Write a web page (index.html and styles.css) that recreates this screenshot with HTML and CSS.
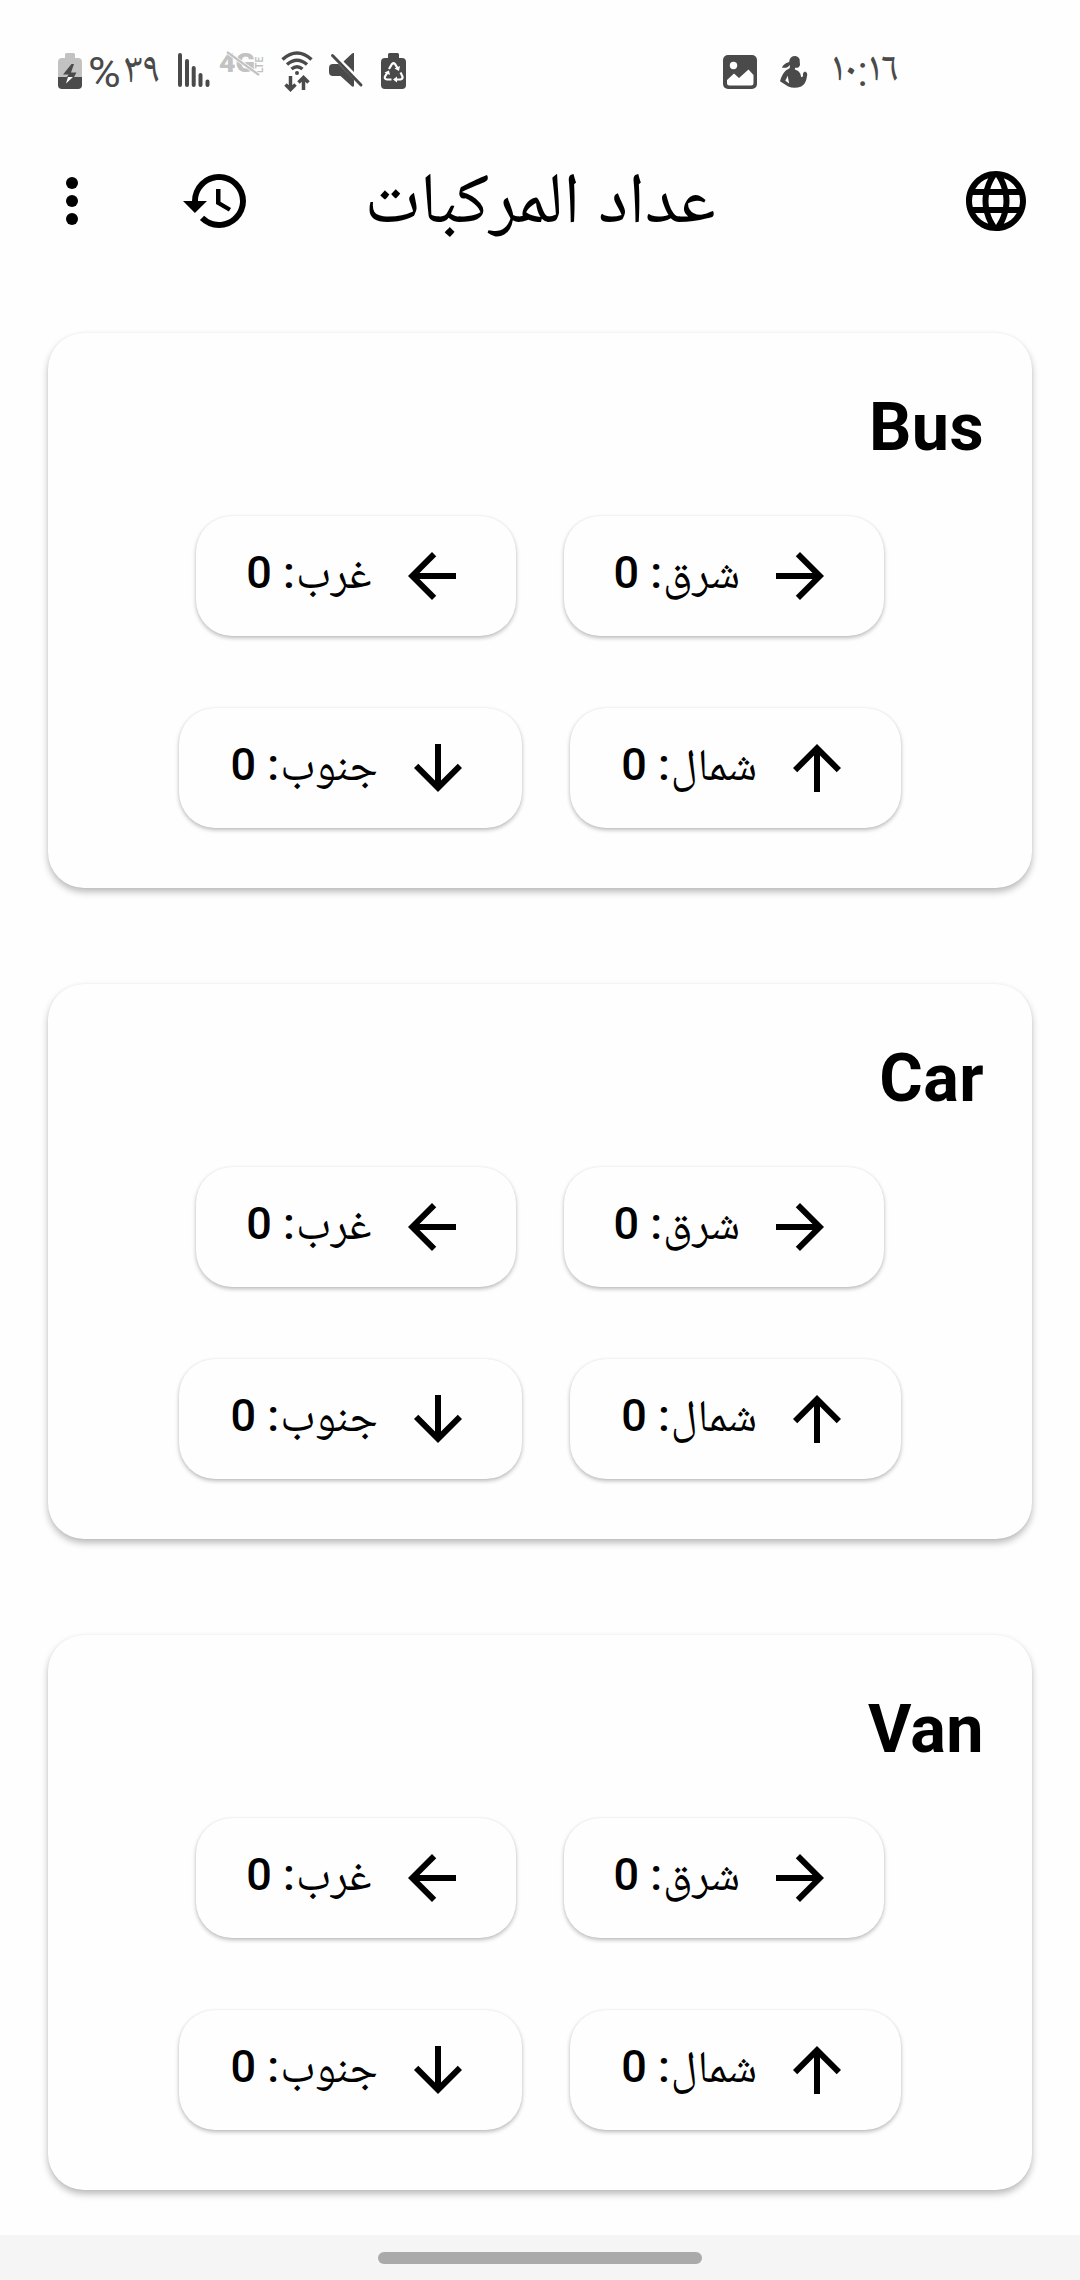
FILE: index.html
```html
<!DOCTYPE html>
<html lang="ar" dir="rtl">
<head>
<meta charset="utf-8">
<title>عداد المركبات</title>
<link rel="stylesheet" href="styles.css">
</head>
<body>
<svg class="defs" aria-hidden="true">
  <symbol id="east" viewBox="0 0 24 24"><path d="M12 4l-1.41 1.41L16.17 11H4v2h12.17l-5.58 5.59L12 20l8-8z"/></symbol>
  <symbol id="west" viewBox="0 0 24 24"><path d="M20 11H7.83l5.59-5.59L12 4l-8 8 8 8 1.41-1.41L7.83 13H20v-2z"/></symbol>
  <symbol id="north" viewBox="0 0 24 24"><path d="M4 12l1.41 1.41L11 7.83V20h2V7.83l5.58 5.59L20 12l-8-8-8 8z"/></symbol>
  <symbol id="south" viewBox="0 0 24 24"><path d="M20 12l-1.41-1.41L13 16.17V4h-2v12.17l-5.58-5.59L4 12l8 8 8-8z"/></symbol>
</svg>

<div class="status" dir="ltr">
  <div class="status-group">
    <svg class="s-battery" width="24" height="36" viewBox="0 0 24 36"><path fill="#c2c2c2" d="M7 1.5Q7 0 8.500 0h7Q17 0 17 1.500V5h3q4 0 4 4v15H0V9q0-4 4-4h3z"/><path fill="#4a4a4a" d="M0 24h24v8q0 4-4 4H4q-4 0-4-4z"/><path fill="#4a4a4a" d="M13.500 11L5 21.500h5.500L9 24h7l2.500-4.500H13L16 11z"/><path fill="#fff" d="M10 24h5l-7 6.500z"/></svg>
    <span class="s-percent">%</span><span class="s-level">٣٩</span>
    <svg class="s-signal" width="32" height="34" viewBox="0 0 32 34" stroke="#4a4a4a" stroke-width="4" stroke-linecap="round"><path d="M2 2v30M9 8v24M15.700 15v17M22.500 22v10M29.500 28.500v3.500"/></svg>
    <span class="s-lte"><b>4G</b><i>LTE</i><svg width="46" height="26" viewBox="0 0 46 26"><path d="M8 1l32 23" stroke="#fff" stroke-width="3.500"/><path d="M8 1l32 23" stroke="#c2c2c2" stroke-width="2.200"/></svg></span>
    <svg class="s-wifi" width="32" height="41" viewBox="0 0 32 41" fill="none" stroke="#4a4a4a" stroke-width="3.500"><path d="M1.500 8.500q14.500-13 29 0M6 13.500q10-8.500 20 0M10.500 18q5.500-4.500 11 0"/><circle cx="16" cy="22" r="2" fill="#4a4a4a" stroke="none"/><path d="M9.500 25v13M4.500 33.500l5 5 5-5M22.500 39V26.500M17.500 31.500l5-5 5 5"/></svg>
    <svg class="s-mute" width="35" height="35" viewBox="0 0 35 35" fill="#4a4a4a"><path d="M25 0v19L14.500 8.500L22.500 1Q24-.5 25 0zM4 11h5.500L25 26.500V33q-1 1.500-2.500 0L11.500 23H4q-4 0-4-4v-4q0-4 4-4z"/><path d="M3.500 2.500l28.500 29.500" stroke="#4a4a4a" stroke-width="3" stroke-linecap="round"/></svg>
    <svg class="s-recycle" width="25" height="36" viewBox="0 0 25 36"><path fill="#4a4a4a" d="M7 1.500Q7 0 8.500 0h8Q18 0 18 1.500V5h3q4 0 4 4v23q0 4-4 4H4q-4 0-4-4V9q0-4 4-4h3z"/><path d="M8 16l3-5q1.500-1.500 3 0l3 5M19.500 19.500l2 4q.5 2.500-2 3H14M10.500 26.500H6q-3-.5-2-3l2.500-4" fill="none" stroke="#fff" stroke-width="2.200"/><path fill="#fff" d="M19 13l-1 5-4.500-2.500zM16 23.500v6L12 26.500zM3.500 19.500L8 17.500l1 4.500z"/></svg>
  </div>
  <div class="status-group">
    <svg class="s-image" width="34" height="34" viewBox="0 0 34 34"><rect width="34" height="34" rx="5" fill="#4a4a4a"/><circle cx="10.500" cy="10.500" r="3.700" fill="#fff"/><path fill="#fff" d="M4 25l7-6.500 5 4.500 9.500-8.500L30.500 20v8q0 2.500-2.500 2.500H6.500Q4 30.500 4 28z"/></svg>
    <svg class="s-person" width="27" height="32" viewBox="0 0 28 33" fill="#4a4a4a"><path d="M9.500 6Q10 0 16 0q5 1 4.500 6 1 3-1 5.500-2 1-4 .5v2q4 1 5.500 4l1 4 2-1q-1-4 2-5 3 1 2 5-1 8-6 10.500Q15 34 8.500 31.500L0 26q2-7 6-11l4-2.500.500-3.500Q8 13 2 12q1-4 7.500-6z"/><path d="M8 20.500l-2.500 5 4 3z" fill="#fff"/></svg>
    <span class="s-time">١٠:١٦</span>
  </div>
</div>

<header class="appbar">
  <svg class="icon" viewBox="0 0 24 24"><path d="M11.990 2C6.470 2 2 6.480 2 12s4.470 10 9.990 10C17.520 22 22 17.520 22 12S17.520 2 11.990 2zm6.930 6h-2.950a15.650 15.650 0 0 0-1.380-3.560A8.030 8.030 0 0 1 18.920 8zM12 4.040c.83 1.200 1.480 2.530 1.910 3.960h-3.820c.43-1.430 1.080-2.760 1.910-3.960zM4.260 14C4.100 13.360 4 12.690 4 12s.1-1.360.26-2h3.380c-.08.66-.14 1.320-.14 2s.06 1.340.14 2H4.260zm.82 2h2.950c.32 1.250.78 2.450 1.380 3.560A7.987 7.987 0 0 1 5.080 16zm2.950-8H5.080a7.987 7.987 0 0 1 4.330-3.560A15.650 15.650 0 0 0 8.030 8zM12 19.960c-.83-1.200-1.480-2.530-1.910-3.960h3.820c-.43 1.430-1.080 2.760-1.910 3.960zM14.340 14H9.660c-.09-.66-.16-1.320-.16-2s.07-1.350.16-2h4.680c.09.650.16 1.320.16 2s-.07 1.340-.16 2zm.25 5.560c.6-1.110 1.060-2.310 1.380-3.560h2.950a8.030 8.030 0 0 1-4.330 3.560zM16.360 14c.08-.66.14-1.320.14-2s-.06-1.340-.14-2h3.380c.16.640.26 1.310.26 2s-.1 1.360-.26 2h-3.380z"/></svg>
  <h1>عداد المركبات</h1>
  <div class="actions">
    <svg class="icon" viewBox="0 0 24 24"><path d="M13 3a9 9 0 0 0-9 9H1l3.890 3.890.070.140L9 12H6c0-3.870 3.130-7 7-7s7 3.130 7 7-3.130 7-7 7c-1.930 0-3.680-.79-4.940-2.060l-1.420 1.420A8.954 8.954 0 0 0 13 21a9 9 0 0 0 0-18zm-1 5v5l4.280 2.540.720-1.210-3.500-2.080V8H12z"/></svg>
    <svg class="icon" viewBox="0 0 24 24"><circle cx="12" cy="6" r="2"/><circle cx="12" cy="12" r="2"/><circle cx="12" cy="18" r="2"/></svg>
  </div>
</header>

<main>
  <section class="card">
    <h2>Bus</h2>
    <div class="row"><button class="btn e"><svg class="icon"><use href="#east"/></svg><span class="label"><span>شرق</span>: 0</span></button><button class="btn w"><svg class="icon"><use href="#west"/></svg><span class="label"><span>غرب</span>: 0</span></button></div>
    <div class="row"><button class="btn n"><svg class="icon"><use href="#north"/></svg><span class="label"><span>شمال</span>: 0</span></button><button class="btn s"><svg class="icon"><use href="#south"/></svg><span class="label"><span>جنوب</span>: 0</span></button></div>
  </section>
  <section class="card">
    <h2>Car</h2>
    <div class="row"><button class="btn e"><svg class="icon"><use href="#east"/></svg><span class="label"><span>شرق</span>: 0</span></button><button class="btn w"><svg class="icon"><use href="#west"/></svg><span class="label"><span>غرب</span>: 0</span></button></div>
    <div class="row"><button class="btn n"><svg class="icon"><use href="#north"/></svg><span class="label"><span>شمال</span>: 0</span></button><button class="btn s"><svg class="icon"><use href="#south"/></svg><span class="label"><span>جنوب</span>: 0</span></button></div>
  </section>
  <section class="card">
    <h2>Van</h2>
    <div class="row"><button class="btn e"><svg class="icon"><use href="#east"/></svg><span class="label"><span>شرق</span>: 0</span></button><button class="btn w"><svg class="icon"><use href="#west"/></svg><span class="label"><span>غرب</span>: 0</span></button></div>
    <div class="row"><button class="btn n"><svg class="icon"><use href="#north"/></svg><span class="label"><span>شمال</span>: 0</span></button><button class="btn s"><svg class="icon"><use href="#south"/></svg><span class="label"><span>جنوب</span>: 0</span></button></div>
  </section>
</main>

<footer class="navbar"><div class="handle"></div></footer>
</body>
</html>
```
FILE: styles.css
```css
* { box-sizing: border-box; }
body {
  margin: 0;
  width: 1080px;
  height: 2280px;
  display: flex;
  flex-direction: column;
  overflow: hidden;
  background: #fefefe;
  color: #000;
  font-family: Roboto, "Noto Naskh Arabic UI", "Noto Naskh Arabic", "Noto Sans Arabic", "DejaVu Sans", sans-serif;
}
.defs { display: none; }
.icon { width: 72px; height: 72px; flex: none; display: block; fill: #000; }

.status {
  height: 117px;
  padding: 51px 181px 0 58px;
  display: flex;
  justify-content: space-between;
  color: #4a4a4a;
}
.status-group { display: flex; align-items: flex-start; height: 42px; }
.status-group svg { flex: none; display: block; overflow: visible; }
.s-battery { margin-top: 2px; }
.s-percent { width: 32px; margin-left: 6px; font-size: 43px; line-height: 43px; transform: scaleX(1.04); transform-origin: left; }
.s-level { width: 38px; margin: 2px 0 0 2px; font-size: 43px; line-height: 40px; direction: ltr; }
.s-signal { margin: 2px 0 0 18px; }
.s-lte { position: relative; display: flex; width: 46px; height: 26px; margin-left: 9px; color: #c2c2c2; }
.s-lte b { width: 37px; font: 900 26px/24px Roboto, sans-serif; transform: scaleX(1.1); transform-origin: left; }
.s-lte i { font: 700 10px/10px Roboto, sans-serif; writing-mode: vertical-rl; transform: rotate(180deg); height: 22px; }
.s-lte svg { position: absolute; inset: 0; }
.s-wifi { margin-left: 16px; }
.s-mute { margin: 2px 0 0 16px; }
.s-recycle { margin: 2px 0 0 17px; }
.s-image { margin-top: 4px; }
.s-person { margin: 5px 0 0 23px; }
.s-time { width: 68px; margin: 1px 0 0 24px; font-size: 42px; line-height: 40px; white-space: nowrap; }

.appbar {
  height: 168px;
  padding: 0 48px 0 36px;
  display: grid;
  grid-template-columns: 204px 1fr 216px;
  align-items: center;
}
.appbar h1 { margin: 0; padding-top: 13px; text-align: center; font-size: 72px; font-weight: 400; line-height: 84px; white-space: nowrap; }
.actions { display: flex; justify-content: space-between; }

main { flex: 1; padding: 48px 48px 0; display: flex; flex-direction: column; gap: 96px; }
.card {
  height: 555px;
  flex: none;
  padding: 49px 48px 60px;
  border-radius: 36px;
  background: #fefefe;
  box-shadow: 0 4px 7px rgba(0,0,0,.27), 0 0 2px rgba(0,0,0,.05);
}
.card h2 { margin: 0 0 44px; font-size: 66.5px; font-weight: 700; line-height: 90px; letter-spacing: .4px; }
.row { display: flex; justify-content: center; gap: 48px; }
.row + .row { margin-top: 72px; }
.btn {
  height: 120px;
  padding: 0 48px;
  display: flex;
  align-items: center;
  gap: 24px;
  border: 0;
  border-radius: 36px;
  background: #fefefe;
  color: #000;
  font: inherit;
  font-size: 45px;
  font-weight: 500;
  box-shadow: 0 2px 4px rgba(0,0,0,.27), 0 0 2px rgba(0,0,0,.05);
}
.label { display: block; height: 67px; white-space: nowrap; line-height: 60px; letter-spacing: 1px; }
.label span { margin-left: 1px; font-weight: 400; line-height: 1; letter-spacing: 0; vertical-align: -6px; }
.e { width: 320.4px; }
.w { width: 319.6px; }
.n { width: 331.4px; }
.s { width: 343px; }

.navbar { height: 45px; flex: none; display: flex; justify-content: center; padding-top: 17px; background: #f5f5f5; }
.handle { width: 324px; height: 12px; border-radius: 6px; background: #aaa; }
```
